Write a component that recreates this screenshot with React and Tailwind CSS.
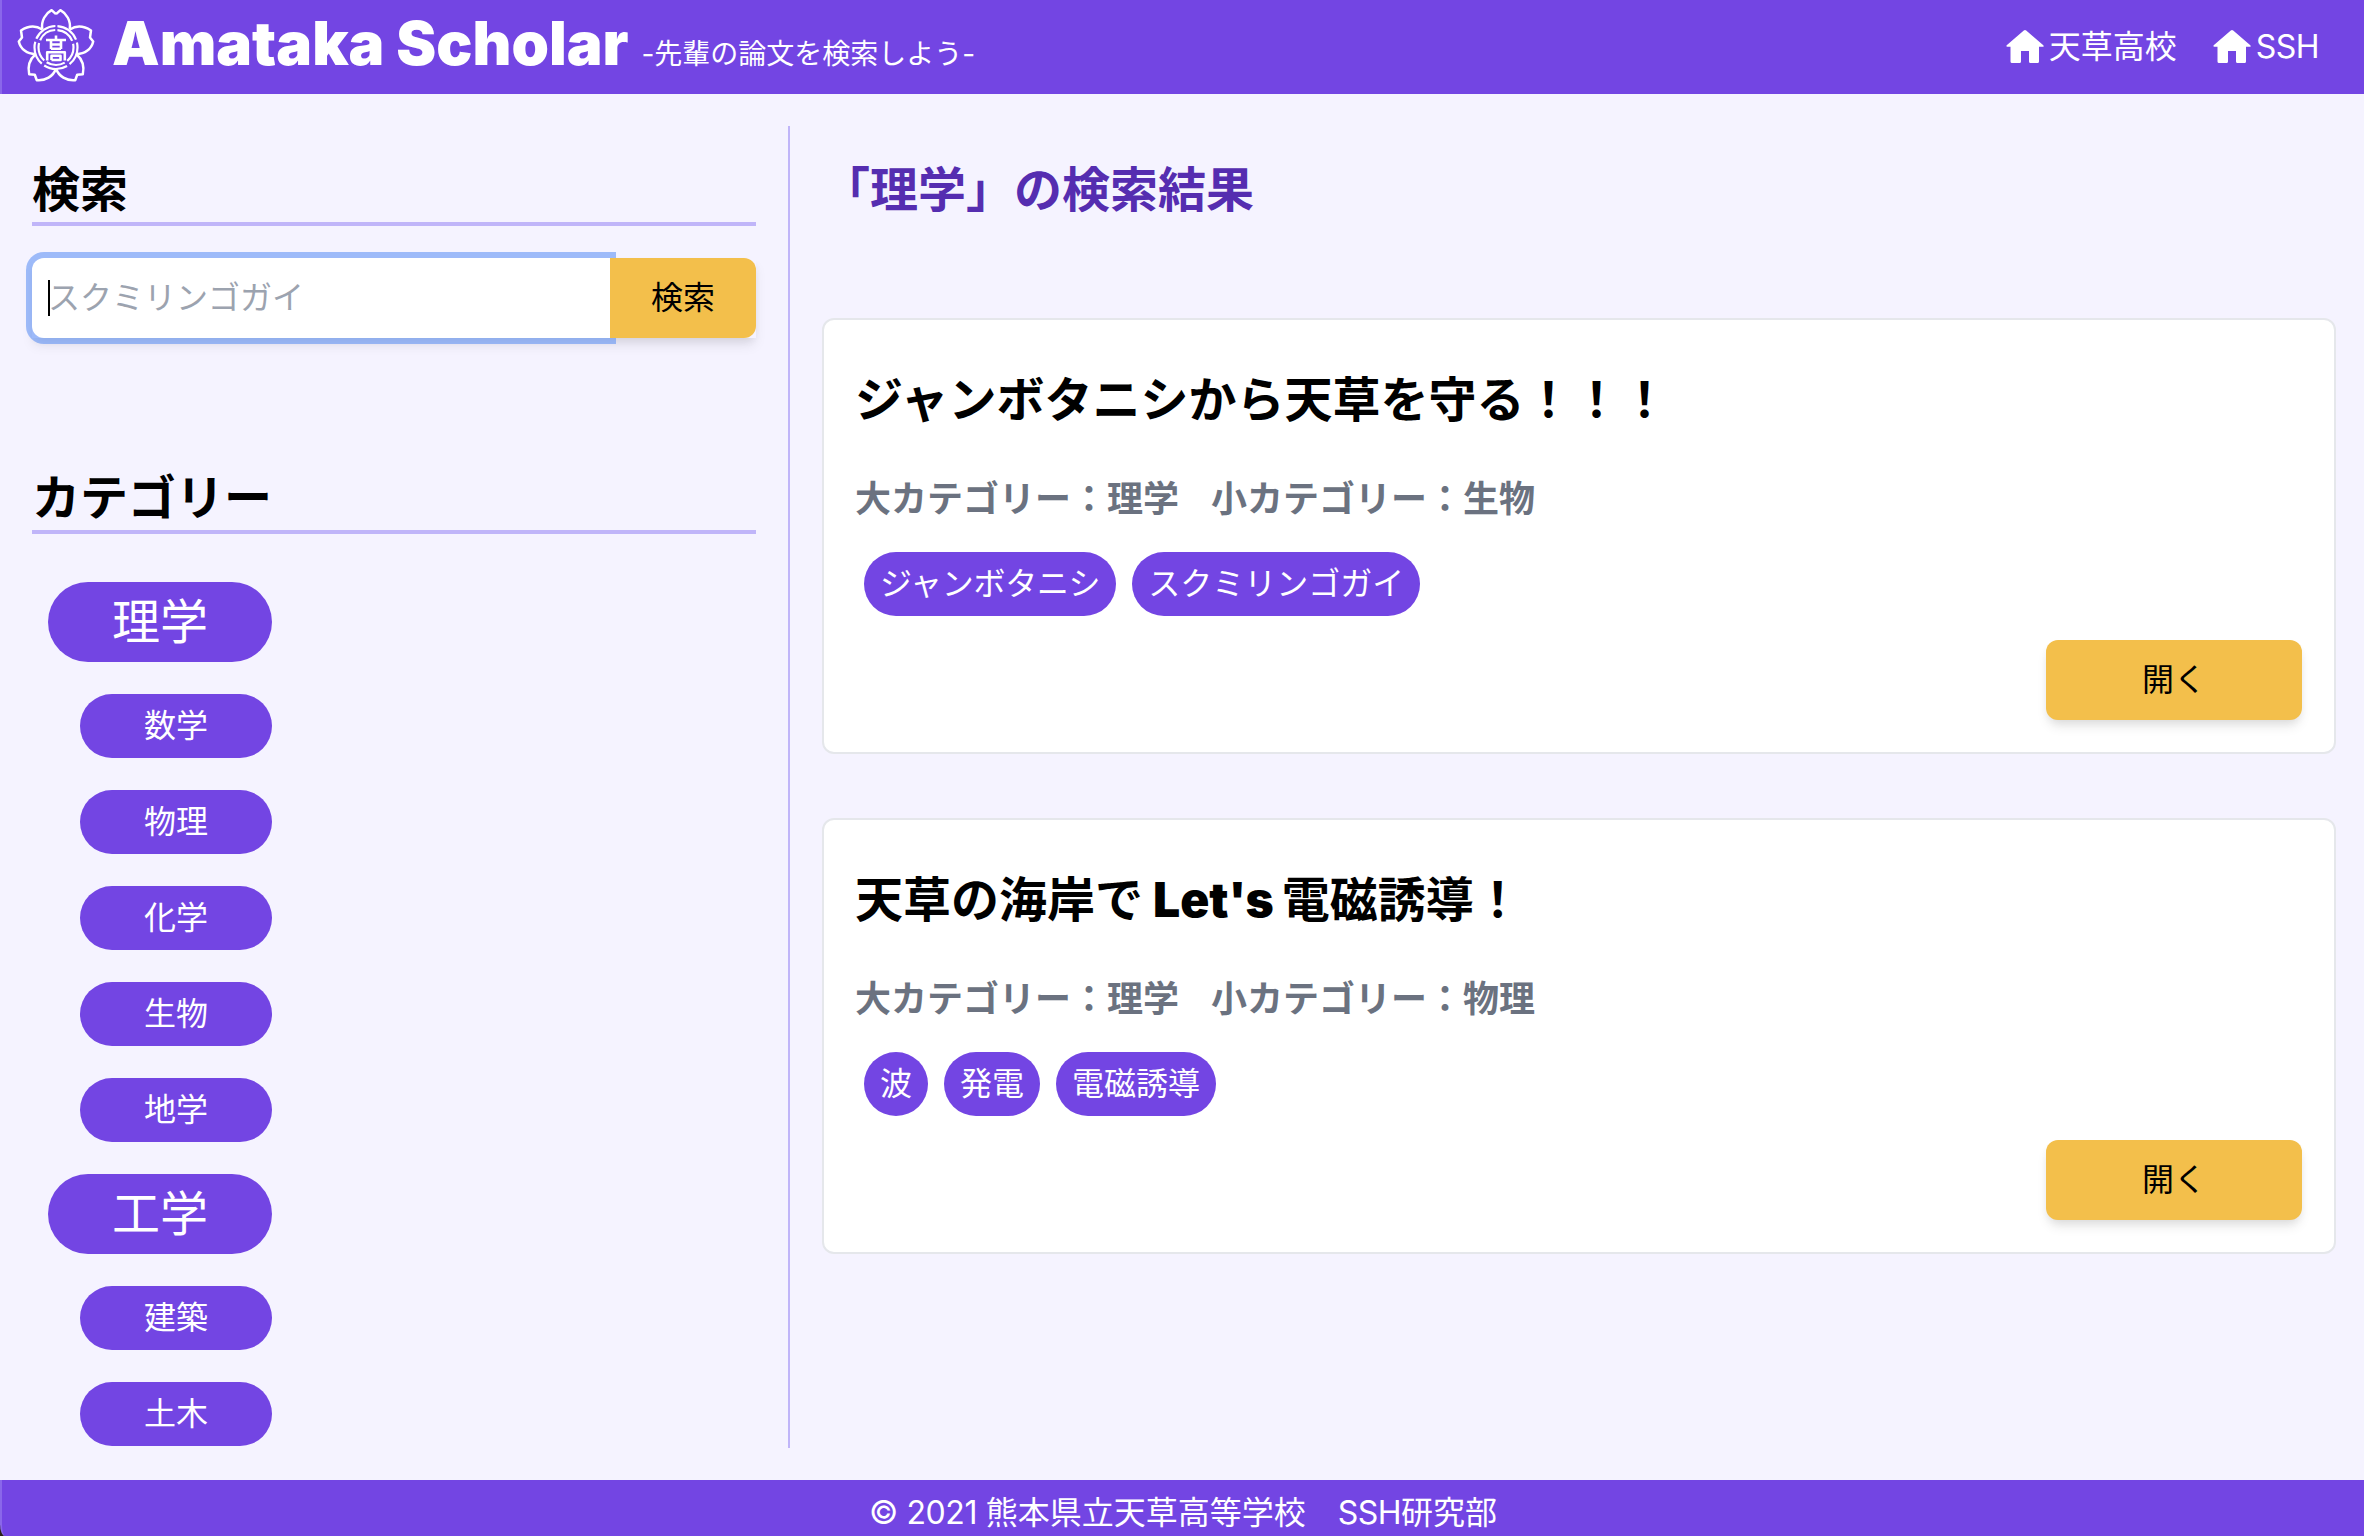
const FONT = "font-['Inter','Noto_Sans_CJK_JP',sans-serif]";

function CrestHalf() {
  return (
    <>
      <path d="M56 14.2L60.4 10.2C66.500 13.500 71 20.500 69.800 29.500" />
      <path d="M69.800 29.500C76 25.500 84 26 91 30.500L90 37.500L93.200 41.500C91.500 49 85 54 76.500 54.200" />
      <path d="M76.500 54.200C82.500 59.500 84.500 66.500 82.800 74.300L77.200 74.700L75.200 80.200C66.500 81 58.800 76.500 56 68.500" />
    </>
  );
}

function Crest() {
  return (
    <svg width="112" height="94" viewBox="0 0 112 94" className="shrink-0" fill="none" stroke="#fff" strokeWidth="2.5" strokeLinejoin="round">
      <CrestHalf />
      <g transform="matrix(-1 0 0 1 112 0)">
        <CrestHalf />
      </g>
      <circle cx="56" cy="47.500" r="21.500" strokeWidth="2.2" strokeDasharray="24.020 3" strokeDashoffset="-1.5" transform="rotate(-90 56 47.500)" />
      <circle cx="56" cy="47.500" r="17.500" strokeWidth="2.2" strokeDasharray="18.990 3" strokeDashoffset="-1.5" transform="rotate(-90 56 47.500)" />
      <g strokeWidth="2.600">
        <path d="M56 35.500V40M46 40H66M51 40V49M61 40V49M51 44.500H61M51 48.700H61" />
        <path d="M47.200 60.500V52.300H64.800V60.500M51.500 60V55.800H60.500V60H51.500" />
      </g>
    </svg>
  );
}

function NavLink({ label, className }) {
  return (
    <a className={`flex items-center ${className}`}>
      <svg width="38" height="36" viewBox="0 0 38 36" fill="#fff" className="mr-[5px]">
        <path d="M17.8 1.6q1.2-1 2.4 0L37.3 16.2q1 1.5-.6 1.5H33V32.500q0 1.500-1.500 1.500h-7q-1.500 0-1.500-1.500V22h-8v10.500q0 1.500-1.500 1.500h-7.500q-1.500 0-1.500-1.500V17.700H1.300q-1.500 0-.6-1.500z" />
      </svg>
      {label}
    </a>
  );
}

const groups = [
  { name: "理学", items: ["数学", "物理", "化学", "生物", "地学"] },
  { name: "工学", items: ["建築", "土木"] },
];

const papers = [
  {
    title: "ジャンボタニシから天草を守る！！！",
    minor: "生物",
    tags: ["ジャンボタニシ", "スクミリンゴガイ"],
  },
  {
    title: <>天草の海岸で<span className="mr-2 ml-2.5 font-black">Let's</span>電磁誘導！</>,
    minor: "物理",
    tags: ["波", "発電", "電磁誘導"],
  },
];

function SectionTitle({ children }) {
  return <h2 className="h-[68px] border-b-4 border-[#c0b5f9] text-[48px] leading-[64px] font-bold whitespace-nowrap">{children}</h2>;
}

function Paper({ title, minor, tags }) {
  return (
    <article className="mb-16 flex h-[436px] flex-col rounded-xl border-2 border-[#e5e7eb] bg-white px-8 pb-8">
      <h3 className="mt-12 -ml-px text-[48px] leading-[64px] font-bold whitespace-nowrap">{title}</h3>
      <p className="mt-[43px] -ml-px flex gap-8 text-[36px] leading-[48px] font-bold whitespace-nowrap text-[#6b7280]">
        <span>大カテゴリー：理学</span>
        <span>小カテゴリー：{minor}</span>
      </p>
      <div className="mt-[29px] ml-2 flex gap-4">
        {tags.map((t) => (
          <span key={t} className={`h-16 rounded-full bg-[#7345e3] px-4 text-[32px] leading-[64px] whitespace-nowrap text-white ${t === "ジャンボタニシ" ? "tracking-[-0.3px]" : ""}`}>{t}</span>
        ))}
      </div>
      <button className="mt-6 h-20 w-64 shrink-0 self-end rounded-xl bg-[#f3bf4b] text-[32px] shadow-[0_8px_12px_-2px_rgba(0,0,0,0.1),0_4px_8px_-2px_rgba(0,0,0,0.06)]">開く</button>
    </article>
  );
}

export default function App() {
  return (
    <div lang="ja" className={`flex h-[1536px] w-[2364px] flex-col overflow-hidden bg-[#f5f3ff] text-black ${FONT}`}>
      <header className="flex h-[94px] shrink-0 items-center border-l-2 border-[#8a67ea] bg-[#7345e3] text-white">
        <div className="-ml-0.5 flex">
          <Crest />
        </div>
        <h1 className="-mt-2 text-[60px] leading-[60px] font-black whitespace-nowrap">Amataka Scholar</h1>
        <span className="mt-3.5 ml-[13px] text-[28px] leading-10 whitespace-nowrap">-先輩の論文を検索しよう-</span>
        <nav className="mr-[45px] ml-auto flex text-[32px] leading-[48px] whitespace-nowrap">
          <NavLink label="天草高校" className="mr-9" />
          <NavLink label="SSH" className="tracking-[-0.5px]" />
        </nav>
      </header>

      <main className="flex h-[1386px] shrink-0 py-8">
        <aside className="w-[790px] shrink-0 border-r-2 border-[#c0b5f9] pr-8 pl-8">
          <div className="pt-8">
            <SectionTitle>検索</SectionTitle>
            <form className="mt-8 flex h-20 shadow-[0_8px_12px_-2px_rgba(0,0,0,0.1),0_4px_8px_-2px_rgba(0,0,0,0.06)]">
              <div className="flex w-[578px] items-center rounded-l-xl bg-white pl-4 text-[32px] text-[#9ca3af] shadow-[0_0_0_6px_rgba(99,148,245,0.6)]">
                <span className="-mr-0.5 h-9 w-0.5 bg-black" />
                スクミリンゴガイ
              </div>
              <button type="button" className="relative w-[146px] rounded-r-xl bg-[#f3bf4b] text-[32px]">検索</button>
            </form>
          </div>
          <div className="pt-[128px]">
            <SectionTitle>カテゴリー</SectionTitle>
            <div className="ml-4 flex w-56 flex-col items-end gap-8 pt-12 text-center text-white">
              {groups.map((g) => (
                <div key={g.name} className="flex w-full flex-col items-end gap-8">
                  <div className="h-20 w-56 rounded-full bg-[#7345e3] text-[48px] leading-[80px]">{g.name}</div>
                  {g.items.map((i) => (
                    <div key={i} className="h-16 w-48 rounded-full bg-[#7345e3] text-[32px] leading-[64px]">{i}</div>
                  ))}
                </div>
              ))}
            </div>
          </div>
        </aside>
        <section className="flex-1 pr-7 pl-8">
          <h2 className="mt-8 mb-24 text-[48px] leading-[64px] font-bold text-[#552db0]">「理学」の検索結果</h2>
          {papers.map((p) => (
            <Paper key={p.minor} {...p} />
          ))}
        </section>
      </main>

      <div className="h-14 shrink-0 bg-[#2a2018]">
        <footer className="h-14 rounded-bl-[5px_12px] border-l-2 border-[#8a67ea] bg-[#7345e3] text-center text-[32px] leading-[66px] whitespace-nowrap text-white">
          <span className="tracking-[-0.4px]">© 2021 </span>熊本県立天草高等学校　<span className="tracking-[-0.5px]">SSH</span>研究部
        </footer>
      </div>
    </div>
  );
}
